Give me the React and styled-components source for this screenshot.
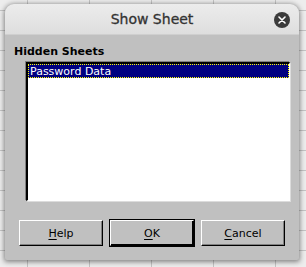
import React from "react";
import styled, { createGlobalStyle } from "styled-components";

const GlobalStyle = createGlobalStyle`
  html, body {
    margin: 0;
    padding: 0;
  }
  body {
    width: 306px;
    height: 267px;
    overflow: hidden;
    font-family: "DejaVu Sans", sans-serif;
    background-color: #ededed;
    background-image:
      linear-gradient(to right, #c4c4c4 1px, transparent 1px),
      linear-gradient(to bottom, #c4c4c4 1px, transparent 1px);
    background-size: 62px 20px;
    background-position: 27px 10px;
  }
`;

const Page = styled.div`
  padding: 4px 7px 7px 5px;
`;

const Dialog = styled.div`
  width: 294px;
  height: 256px;
  display: flex;
  flex-direction: column;
  background: #c0c0c0;
  border-radius: 9px 9px 2px 2px;
  box-shadow: 0 1px 5px 1px rgba(0, 0, 0, 0.45);
  overflow: hidden;
`;

const TitleBar = styled.div`
  height: 31px;
  flex: none;
  display: flex;
  align-items: center;
  justify-content: center;
  position: relative;
  background: linear-gradient(to bottom, #ececec, #dedede);
  border-bottom: 1px solid #cfcfcf;
  box-sizing: border-box;
`;

const Title = styled.span`
  font-size: 14px;
  font-weight: 500;
  color: #333;
  -webkit-text-stroke: 0.3px #333;
`;

const CloseButton = styled.div`
  position: absolute;
  right: 9px;
  top: 8px;
  width: 16px;
  height: 16px;
  border-radius: 50%;
  background: #3b3b3b;
  display: flex;
  align-items: center;
  justify-content: center;
`;

const Body = styled.div`
  flex: 1;
  display: flex;
  flex-direction: column;
  padding: 10px 14px 14px 9px;
`;

const Label = styled.div`
  font-size: 11px;
  font-weight: bold;
  color: #000;
  line-height: 13px;
`;

const ListBox = styled.div`
  margin: 4px 0 0 12px;
  width: 264px;
  height: 139px;
  box-sizing: border-box;
  background: #fff;
  border-top: 2px solid #000;
  border-left: 2px solid #000;
  border-right: 1px solid #fff;
  border-bottom: 1px solid #fff;
  box-shadow: -1px -1px 0 #808080, 1px 1px 0 #dcdcdc;
`;

const ListItem = styled.div`
  height: 14px;
  padding-left: 2px;
  box-sizing: border-box;
  display: flex;
  align-items: center;
  font-size: 11px;
  color: ${(p) => (p.$selected ? "#fff" : "#000")};
  background: ${(p) => (p.$selected ? "#000080" : "transparent")};
  outline: ${(p) => (p.$selected ? "1px dotted #ffff00" : "none")};
  outline-offset: -1px;
`;

const ButtonRow = styled.div`
  margin-top: auto;
  margin-left: 5px;
  display: flex;
  gap: 7px;
`;

const Button = styled.button`
  width: 84px;
  height: 26px;
  box-sizing: border-box;
  padding: 0;
  background: #c0c0c0;
  font-family: "DejaVu Sans", sans-serif;
  font-size: 11px;
  color: #000;
  border-top: 1px solid #fff;
  border-left: 1px solid #fff;
  border-right: 1px solid #000;
  border-bottom: 1px solid #000;
  box-shadow: ${(p) =>
    p.$default ? "inset -1px -1px 0 #000, 0 0 0 1px #000" : "inset -1px -1px 0 #808080"};
  u {
    text-decoration: underline;
    text-underline-offset: 2px;
  }
`;

const App = () => {
  return (
    <>
      <GlobalStyle />
      <Page>
        <Dialog>
          <TitleBar>
            <Title>Show Sheet</Title>
            <CloseButton>
              <svg width="8" height="8" viewBox="0 0 8 8">
                <path d="M1 1 L7 7 M7 1 L1 7" stroke="#fff" strokeWidth="1.6" strokeLinecap="round" />
              </svg>
            </CloseButton>
          </TitleBar>
          <Body>
            <Label>Hidden Sheets</Label>
            <ListBox>
              <ListItem $selected>Password Data</ListItem>
            </ListBox>
            <ButtonRow>
              <Button>
                <u>H</u>elp
              </Button>
              <Button $default>
                <u>O</u>K
              </Button>
              <Button>
                <u>C</u>ancel
              </Button>
            </ButtonRow>
          </Body>
        </Dialog>
      </Page>
    </>
  );
};

export default App;
